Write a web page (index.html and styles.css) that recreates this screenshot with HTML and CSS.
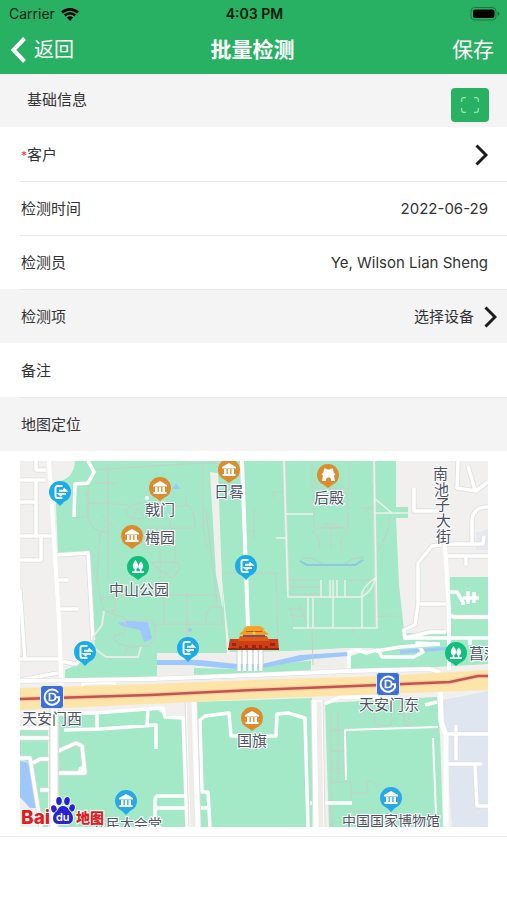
FILE: index.html
```html
<!DOCTYPE html>
<html lang="zh-CN">
<head>
<meta charset="utf-8">
<meta name="viewport" content="width=device-width, initial-scale=1">
<title>批量检测</title>
<link rel="stylesheet" href="styles.css">
</head>
<body>
<header class="top">
  <div class="status">
    <div class="carrier">
      <span>Carrier</span>
      <svg class="wifi" viewBox="0 0 18 13" aria-hidden="true">
        <path d="M1 4.6C5.500.3 12.500.3 17 4.600" fill="none" stroke="#000" stroke-width="2.700"/>
        <path d="M3.800 7.500C6.800 4.700 11.200 4.700 14.200 7.500" fill="none" stroke="#000" stroke-width="2.400"/>
        <path d="M5.900 9.500Q9 7 12.100 9.500L9 13Z"/>
      </svg>
    </div>
    <span class="clock">4:03 PM</span>
    <svg class="battery" viewBox="0 0 30 14" aria-hidden="true">
      <rect x="1" y=".5" width="25" height="12.500" rx="3.500" fill="none" stroke="#167a3e"/>
      <rect x="3" y="2.500" width="21.500" height="8.500" rx="2"/>
      <path d="M27.500 4.500q2 .5 2 2.200t-2 2.200Z" fill="#167a3e"/>
    </svg>
  </div>
  <nav class="bar">
    <button class="nav-btn back" type="button">
      <svg class="back-icon" viewBox="0 0 15 26" aria-hidden="true"><path d="M13.500 1.500 2.500 13l11 11.500" fill="none" stroke="#fff" stroke-width="4"/></svg>
      <span>返回</span>
    </button>
    <h1>批量检测</h1>
    <button class="nav-btn save" type="button">保存</button>
  </nav>
</header>

<main>
  <section class="head">
    <h2>基础信息</h2>
    <button class="scan" type="button" aria-label="扫描">
      <svg viewBox="0 0 18 16" aria-hidden="true"><path d="M.7 5V2.700q0-2 2-2H5M13 .7h2.300q2 0 2 2V5M17.300 11v2.300q0 2-2 2H13M5 15.300H2.700q-2 0-2-2V11" fill="none" stroke="#a5e0bc" stroke-width="1.200"/></svg>
    </button>
  </section>

  <button class="row link" type="button">
    <span><span class="star">*</span>客户</span>
    <svg class="chev" viewBox="0 0 13 22" aria-hidden="true"><path d="M1.500 1.500 11 11l-9.500 9.500" fill="none" stroke="#1b1b1b" stroke-width="3"/></svg>
  </button>
  <div class="row line"><span>检测时间</span><time datetime="2022-06-29">2022-06-29</time></div>
  <div class="row line"><span>检测员</span><span>Ye, Wilson Lian Sheng</span></div>
  <button class="row shade pick line" type="button">
    <span>检测项</span>
    <span class="value">选择设备
      <svg class="chev" viewBox="0 0 13 22" aria-hidden="true"><path d="M1.500 1.500 11 11l-9.500 9.500" fill="none" stroke="#1b1b1b" stroke-width="3"/></svg>
    </span>
  </button>
  <div class="row"><label for="note">备注</label><input id="note" type="text"></div>
  <div class="row shade line"><span>地图定位</span></div>

  <div class="map-wrap">
  <svg class="map" viewBox="20 461 468 366" role="img" aria-label="地图">
    <defs>
      <g id="exit">
        <path d="M-11 0a11 11 0 1 1 22 0q0 7-7 10L0 14l-4-4q-7-3-7-10Z" fill="#1aacea"/>
        <path d="M2.500-6H-2.500q-2 0-2 2v8q0 2 2 2H2.500M-1-1.300H6L3.500-3.500M6 2H-1l2.500 2" fill="none" stroke="#fff" stroke-width="1.900"/>
      </g>
      <g id="temple">
        <path d="M-7-3 0-7 7-3v1.500H-7ZM-5-1h2.500v5h-2.500ZM-1.200-1h2.400v5h-2.400ZM2.500-1h2.500v5H2.500ZM-6.500 4h13v2h-13Z" fill="#fff"/>
      </g>
      <g id="brown">
        <path d="M-11 0a11 11 0 1 1 22 0q0 7-7 10L0 13l-4-3q-7-3-7-10Z" fill="#dd8b2d"/>
        <use href="#temple"/>
      </g>
      <g id="museum">
        <path d="M-11 0a11 11 0 1 1 22 0q0 7-7 10L0 14l-4-4q-7-3-7-10Z" fill="#27a9e5"/>
        <use href="#temple"/>
      </g>
      <g id="park">
        <path d="M-11 0a11 11 0 1 1 22 0q0 7-7 10L0 13l-4-3q-7-3-7-10Z" fill="#0fbf7b"/>
        <path d="M-2.500-7C.8-3 .8 1-1.600 2V4.200H1.800V2.200C-.6 1 0-3 3-5.500 6-2 5.800 1.200 3.500 2.200V4.200H6V6H-6V4.200H-3.400V2C-6 1-5.800-3-2.500-7Z" fill="#fff"/>
      </g>
      <g id="metro">
        <rect x="-11.500" y="-11.500" width="23" height="23" rx="3" fill="#3d70d6" stroke="#fff" stroke-width=".8"/>
        <path d="M6.200-4.500A7.600 7.600 0 1 0 7 3.500V.3H3.500" fill="none" stroke="#fff" stroke-width="2"/>
        <path d="M-2.500-3.500V3.500H0q3.500 0 3.500-3.500T0-3.500Z" fill="none" stroke="#fff" stroke-width="1.700"/>
      </g>
    </defs>

    <rect x="20" y="461" width="468" height="366" fill="#f1f0ee"/>

    <!-- parks -->
    <g fill="#a3e8c7">
      <path d="M75 461H211L216 520 224 608 227 653H157V676L65 681V670L76 665 90 650 92 640 88 553H58L55 482Q74 480 75 461Z"/>
      <path d="M211 461H396V507H408V518H396L399 585 405 640 402 648H348L300 651 230 652 222 580 218 473H211Z"/>
      <path d="M450 577H488V664L348 672V657L400 640V633H450Z"/>
      <path d="M265 666 311 659V674L194 680V667Z"/>
      <path d="M57 714 155 708 163 714 184 718 188 827H57Z"/>
      <path d="M20 727H48V827H38L30 765 20 757Z"/>
      <path d="M195 702 312 698V827H200Z"/>
      <path d="M325 703 437 697 440 735 443 827H329Z"/>
    </g>
    <path d="M157 653 230 654 350 648V657L285 663 240 669 194 668V675H157Z" fill="#efeeea"/>
    <path d="M312 659 348 652V673L312 675Z" fill="#efeeea"/>
    <path d="M443 700 488 691V827H452L445 735Z" fill="#e0e6ef"/>
    <path d="M476 533 488 529V550H476Z" fill="#e5e8ee"/>

    <!-- water -->
    <g fill="#9ec8fb">
      <path d="M157 660H200L237 664 262 664 300 655 348 652V656L312 659 262 668 235 669 190 665H157Z"/>
      <path d="M118 623 128 621 148 622 152 639 144 642 140 630 122 626Z"/>
      <path d="M20 761Q30 761 33 772L38 808H30L20 797Z"/>
      <path d="M400 650 446 647V650L400 654Z"/>
      <path d="M172 489 176 483 180 489Z"/><circle cx="190" cy="630" r="2"/>
    </g>
    <path d="M300 561 307 565H355L363 560" fill="none" stroke="#8fc6e0" stroke-width="2"/>
    <path d="M302 558 312 558 323 564M345 564 352 559 364 557" fill="none" stroke="#b7cfc4" stroke-width="1"/>

    <!-- park paths -->
    <g class="paths">
      <path d="M91 470 201 463M95 483H116M88 503H108M86 491 88 518M76 517H85M108 466V580M88 484V516Q91 531 103 532H108M108 504H126M100 532 97 580 101 600M101 515 114 528M108 520V535"/>
      <path d="M131 518Q121 511 131 506L143 502M132 518 138 508 144 518Q137 520 131 518M174 506H189Q195 512 195 528H144V550M170 518V530M186 496V506"/>
      <path d="M144 545H175V562M160 545V578M150 562H178Q182 570 172 578Q158 570 150 562M178 562 162 578"/>
      <path d="M201 463H236M203 463V525L207 549M206 510 216 592"/>
      <path d="M100 597H112L121 595H216M100 597 104 611 122 617 126 620H152Q158 630 154 640L148 646H127Q111 642 114 636L125 633V620M154 624H222V608L214 606Q206 608 206 617V623M164 595V623M187 595V637M216 592 217 607M104 612 115 611V595M125 655 127 648 137 647"/>
      <path d="M312 461V488H349V461M313 488 314 528H348V488M312 530 319 540 320 550M347 530 341 540V552M331 530V548M320 527H342M323 524H339M273 498V492H285M254 508V540M247 531H254"/>
      <path d="M390 515 388 530 379 550M360 508H372M366 508V514"/>
      <path d="M290 580H321M290 587H321M290 594H321M346 580H375M377 616H398M312 628 313 665M353 628V634M288 609H306M292 616H305M290 608 294 625M299 604 307 625"/>
      <path d="M222 573H276L278 648"/>
      <path d="M331 730H344M331 751H345M338 712V780M344 732V775M331 768H342M331 782H351V811M351 793H367V782Q372 778 376 786M351 811H366M330 802 333 827M331 712V827M365 712V722M374 712 375 725H391V712M404 712V725H415M409 712V722"/>
    </g>
    <g fill="none" stroke="#d5dcd4" stroke-width="3">
      <path d="M284 461 288 590M374 461 376 625"/>
    </g>
    <g fill="none" stroke="#edf1ec" stroke-width="1.500">
      <path d="M284 461 288 597H362M374 461 377 628H293M313 597V628M308 597V628M333 580V628M330 580V597M337 580V597M345 580V597M321 580V597M362 597V628M286 514H313M374 498 392 513H408M374 513H392M276 538H287M362 597Q360 589 375 578Q374 589 362 597"/>
    </g>

    <!-- road casings -->
    <g fill="none" stroke="#dcdcdc" stroke-linejoin="round" stroke-width="5">
      <path d="M20 480H45M36 461V470H46M20 502H36V481M20 536H55M36 502V535M41 536V560H20M56 555 88 553 93 640M20 590 25 660M57 580H68M60 609H78M20 659H60M20 680 58 673M60 661 76 664 84 656"/>
      <path d="M414 488V511H438M458 461 457 488 476 491 488 482M475 490 468 466M444 544H483L484 536M441 545 432 546 418 563V604L415 625 404 630 405 638 430 632H446M472 545V522Q472 507 488 507M448 556H488M466 556V565"/>
      <path d="M420 604H446M448 615 455 617H488"/>
      <path d="M20 728H50M20 738H50M20 758H30L41 827M33 763 40 759H50M40 790H50M56 752 76 743 82 746 85 773H56"/>
      <path d="M447 734H488M447 764H482M475 765 477 806H488M456 725V760"/>
    </g>
    <!-- roads -->
    <g fill="none" stroke="#fff" stroke-linejoin="round" stroke-width="3.500">
      <path d="M20 480H45M36 461V470H46M20 502H36V481M20 536H55M36 502V535M41 536V560H20M56 555 88 553 93 640M20 590 25 660M57 580H68M60 609H78M20 659H60M20 680 58 673M60 661 76 664 84 656"/>
      <path d="M88 461 94 472 88 483 75 484 74 517"/>
      <path d="M414 488V511H438M458 461 457 488 476 491 488 482M475 490 468 466M444 544H483L484 536M441 545 432 546 418 563V604L415 625 404 630 405 638 430 632H446M472 545V522Q472 507 488 507M448 556H488M466 556V565"/>
      <path d="M420 604H446M405 638H488M448 592H457L463 602V605M463 598H479M468 591V604M474 592V603M448 615 455 617H488M470 638V645"/>
      <path d="M57 714 95 713 147 709 163 708 165 717 183 718 187 827M64 730 100 729 156 725V749M97 728V713M147 725 148 709M20 728H50M20 738H50M20 758H30L41 827M33 763 40 759H50M40 790H50M56 752 76 743 82 746 85 773H56"/>
      <path d="M187 796H159Q155 796 155 800V827M157 808H207M247 736H231L229 713 205 716 200 720 202 792H208L210 827M260 736H276L277 714 288 713 305 718 308 827M310 803H352"/>
      <path d="M346 780 345 730 438 727M433 738 436 815" stroke-width="2"/>
      <path d="M447 734H488M447 764H482M475 765 477 806H488M456 725V760"/>
      <path d="M349 672V652L358 650 366 653 378 650 382 657H414L423 652 417 643 440 644M376 651 400 647 440 644"/>
      <path d="M82 690 83 683 114 682V690M325 704 340 697H380M425 705 437 702"/>
    </g>
    <circle cx="82" cy="770" r="3" fill="#f4fff9" stroke="#fff" stroke-width="1.500"/>
    <circle cx="147" cy="498" r="2" fill="#fff"/>
    <path d="M104 611 102 625 93 637 94 648 106 657H138L141 647" fill="none" stroke="#e6ebe5" stroke-width="2"/>
    <path d="M49 461 59 620 62 700M445 545 449 610V670M242 461 246 570 248 627" fill="none" stroke="#fff" stroke-width="4"/>
    <path d="M210 472 216 473 222 580 223 610 216 575Z" fill="#efefec"/>
    <path d="M54 705V827" fill="none" stroke="#ddd" stroke-width="10"/>
    <path d="M54 705V827" fill="none" stroke="#fff" stroke-width="7"/>
    <path d="M191 700 195 827M317 700 319 827" fill="none" stroke="#ddd" stroke-width="13"/>
    <path d="M191 700 195 827M317 700 319 827" fill="none" stroke="#fff" stroke-width="11"/>
    <path d="M189 702 193 827M319 702 321 827" fill="none" stroke="#efece8" stroke-width="5"/>
    <path d="M440 688 441 722 446 735V827" fill="none" stroke="#fff" stroke-width="5"/>

    <!-- avenue -->
    <path d="M20 681 150 679 253 675 348 671 430 669 440 672" fill="none" stroke="#ddd" stroke-width="5"/>
    <path d="M20 681 150 679 253 675 348 671 430 669 440 672" fill="none" stroke="#fff" stroke-width="4"/>
    <path d="M20 688 150 684 253 680 380 676 488 670V690L380 694 253 699 150 704 20 710Z" fill="#fde4a9"/>
    <path d="M20 699 150 695 253 690 380 685 450 682 478 676 488 676" fill="none" stroke="#f5d09f" stroke-width="5"/>
    <path d="M20 699 150 695 253 690 380 685 450 682 478 676 488 676" fill="none" stroke="#c45353" stroke-width="2.500"/>

    <!-- Tiananmen gate -->
    <path d="M239 650V671M244.500 650V671M250 650V671M255.500 650V671M261 650V671" stroke="#fff" stroke-width="3.500"/>
    <path d="M237 650V671M242 650V671M247.500 650V671M253 650V671M258.500 650V671M263 650V671" stroke="#bed3cc" stroke-width=".8"/>
    <path d="M230 639H278L279 650H228Z" fill="#cf3f16"/>
    <path d="M228 648H279V650H228ZM232 643h4v3h-4ZM270 643h5v3h-5ZM239 646h3v3h-3ZM245 645h3v4h-3ZM252 645h4v4h-4ZM259 645h3v4h-3ZM265 646h3v3h-3Z" fill="#972613"/>
    <path d="M240 636H267L269 641H238Z" fill="#e35a12"/>
    <path d="M243 633H265V637H243Z" fill="#725577"/>
    <path d="M239 634 244 630H263L269 634 265 635H243Z" fill="#f59b20"/>
    <path d="M246 628H262V632H246Z" fill="#bd501e"/>
    <path d="M243 629 247 626H260L265 629 261 631H246Z" fill="#f6a427"/>
    <circle cx="254" cy="633" r="1.500" fill="#ffd941"/>

    <!-- markers -->
    <use href="#exit" x="60" y="492"/>
    <use href="#exit" x="246" y="566"/>
    <use href="#exit" x="85" y="652"/>
    <use href="#exit" x="188" y="648"/>
    <use href="#brown" x="160" y="488"/>
    <use href="#brown" x="229" y="470"/>
    <use href="#brown" x="132" y="536"/>
    <use href="#brown" x="252" y="718"/>
    <path d="M317 475a11 11 0 1 1 22 0q0 7-7 10l-4 3-4-3q-7-3-7-10Z" fill="#dd8b2d"/>
    <path d="M324 468.500h2l1 1h3l1-1h2l.6 4 1.900 2-1.500 1 1 5.500h-4v-2q-2-3.500-5 0v2h-4l1-5.500-1.500-1 1.900-2Z" fill="#fff"/>
    <use href="#park" x="138" y="567"/>
    <use href="#park" x="456" y="653"/>
    <use href="#museum" x="126" y="801"/>
    <use href="#museum" x="391" y="798"/>
    <use href="#metro" x="52" y="697"/>
    <use href="#metro" x="388" y="684"/>

    <!-- labels -->
    <g class="label">
      <text x="145" y="515">戟门</text>
      <text x="214" y="497">日晷</text>
      <text x="145" y="543">梅园</text>
      <text x="109" y="595">中山公园</text>
      <text x="314" y="503">后殿</text>
      <text x="433 434 435 436 436" y="479 495 510 526 542">南池子大街</text>
      <text x="469" y="659">菖蒲河</text>
      <text x="22" y="724">天安门西</text>
      <text x="359" y="710">天安门东</text>
      <text x="237" y="746">国旗</text>
      <text class="small" x="92" y="829">人民大会堂</text>
      <text class="small" x="342" y="826">中国国家博物馆</text>
    </g>

    <!-- Baidu logo -->
    <g class="brand">
      <text class="bai" x="21" y="824">Bai</text>
      <g fill="#2723d5" stroke="#fff" stroke-width="1.500" paint-order="stroke">
        <ellipse cx="54" cy="809" rx="2.800" ry="3.800" transform="rotate(-15 54 809)"/>
        <ellipse cx="59" cy="801" rx="2.800" ry="4"/>
        <ellipse cx="67" cy="801" rx="2.800" ry="4" transform="rotate(8 67 801)"/>
        <ellipse cx="72" cy="808" rx="2.800" ry="3.800" transform="rotate(15 72 808)"/>
        <path d="M63 806q4 0 6 4 4 4 4 8 0 6-6 6H59q-6 0-6-6 0-4 4-7 2-5 6-5Z"/>
      </g>
      <text class="du" x="56" y="821">du</text>
      <text class="ditu" x="76" y="823">地图</text>
    </g>
  </svg>
  </div>
</main>
</body>
</html>
```
FILE: styles.css
```css
* { box-sizing: border-box; }

body {
  margin: 0;
  background: #fff;
  color: #333;
  font: 15px/20px Inter, "Noto Sans CJK SC", sans-serif;
}

button {
  margin: 0;
  border: 0;
  padding: 0;
  background: none;
  color: inherit;
  font: inherit;
}

svg { display: block; }

.top {
  background: #28b162;
  color: #fff;
}

.status,
.bar {
  display: grid;
  grid-template-columns: 1fr auto 1fr;
  align-items: center;
}

.status {
  height: 26px;
  padding: 2px 7px 0 9px;
  color: #0b1d12;
  font-size: 14px;
}

.carrier {
  display: flex;
  align-items: center;
  gap: 6px;
}

.wifi { width: 18px; height: 13px; }

.clock { font-weight: 600; color: #061a0e; }

.battery {
  width: 30px;
  height: 14px;
  justify-self: end;
}

.bar {
  height: 48px;
  padding: 0 13px 0 11px;
  font-size: 20px;
}

h1 {
  margin: 0;
  font-size: 21px;
  font-weight: 700;
}

.back {
  display: flex;
  align-items: center;
  gap: 8px;
  justify-self: start;
}

.back-icon { width: 15px; height: 26px; }

.save { justify-self: end; font-size: 21px; }

.head {
  display: flex;
  justify-content: space-between;
  height: 53px;
  padding: 14px 18px 0 27px;
  background: #f4f4f4;
}

h2 {
  margin: 2px 0 0;
  font-size: 15px;
  font-weight: 400;
}

.scan {
  display: grid;
  place-items: center;
  width: 38px;
  height: 34px;
  border-radius: 4px;
  background: #28b162;
}

.scan svg { width: 18px; height: 16px; }

.row {
  display: flex;
  align-items: center;
  justify-content: space-between;
  width: 100%;
  height: 54px;
  padding: 2px 19px 0 21px;
  text-align: left;
}

.line {
  background-image: linear-gradient(#e8e8e8, #e8e8e8);
  background-repeat: no-repeat;
  background-size: 100% 1px;
  background-position: 20px 0;
}

.shade { background-color: #f4f4f4; }

.star { color: #f0374a; font-size: 12px; }

.pick { padding-right: 10px; }

.value {
  display: flex;
  align-items: center;
  gap: 10px;
}

.chev { width: 13px; height: 22px; }

.row input {
  flex: 1;
  min-width: 0;
  margin-left: 16px;
  border: 0;
  background: none;
  font: inherit;
  text-align: right;
  outline: 0;
}

.map-wrap {
  padding: 10px 19px 9px 20px;
  border-bottom: 1px solid #eee;
}

.map {
  width: 100%;
  height: auto;
}

.paths {
  fill: none;
  stroke: #c8cec5;
  stroke-width: 1px;
}

.label text {
  fill: #4c5263;
  stroke: #fff;
  stroke-width: 2px;
  paint-order: stroke;
  font: 15px "Noto Sans CJK SC", sans-serif;
}

.label .small { font-size: 14px; }

.brand text {
  stroke: #fff;
  stroke-width: 2px;
  paint-order: stroke;
  font-family: Inter, "Noto Sans CJK SC", sans-serif;
  font-weight: 800;
}

.brand .bai { fill: #e01d20; font-size: 19px; }

.brand .du {
  fill: #fff;
  stroke: none;
  font-size: 11px;
  font-weight: 600;
}

.brand .ditu { fill: #e01d20; font-size: 14px; }
```
